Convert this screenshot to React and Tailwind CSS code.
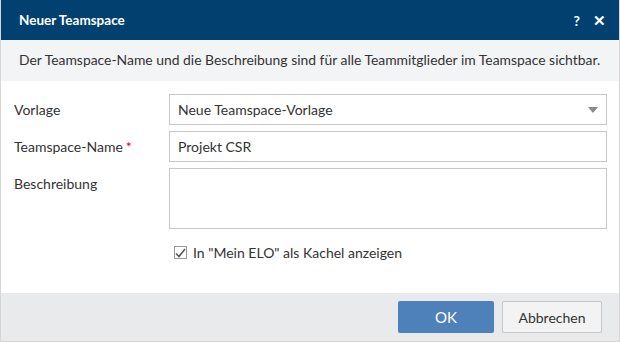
import React, { useState } from 'react';

const font = { fontFamily: 'Lato, "Open Sans", sans-serif' };

function FieldRow({ label, required, children, top }) {
  return (
    <div className={`flex ${top ? 'items-start' : 'items-center'}`}>
      <div className={`w-[155px] shrink-0 text-[14px] text-[#333] ${top ? 'pt-[5px]' : ''}`}>
        {label}
        {required && <span className="ml-[3px] text-[#d0021b]">*</span>}
      </div>
      <div className="flex-1">{children}</div>
    </div>
  );
}

export default function App() {
  const [name, setName] = useState('Projekt CSR');
  const [desc, setDesc] = useState('');
  const [tile, setTile] = useState(true);

  return (
    <div
      className="flex h-[342px] w-[620px] flex-col border-x border-b border-[#d6d6d6] bg-white text-[#333]"
      style={font}
    >
      {/* Title bar */}
      <div className="flex h-[40px] shrink-0 items-center justify-between bg-[#02406f] pl-[18px] pr-[13px] text-white">
        <span className="text-[13.5px] font-bold">Neuer Teamspace</span>
        <div className="flex items-center gap-[13px] text-[14px] font-bold">
          <span>?</span>
          <span className="text-[15px] leading-none">✕</span>
        </div>
      </div>

      {/* Info */}
      <div className="flex h-[41px] shrink-0 items-center whitespace-nowrap bg-[#f3f4f6] px-[18px] text-[13.9px]">
        Der Teamspace-Name und die Beschreibung sind für alle Teammitglieder im Teamspace sichtbar.
      </div>

      {/* Form */}
      <div className="flex flex-1 flex-col gap-[6px] pl-[13px] pr-[12px] pt-[13px]">
        <FieldRow label="Vorlage">
          <div className="flex h-[31px] items-center justify-between border border-[#c8c8c8] pl-[8px] pr-[8px] text-[14px]">
            <span>Neue Teamspace-Vorlage</span>
            <svg width="10" height="6" viewBox="0 0 10 6">
              <path d="M0 0h10L5 6z" fill="#8a8a8a" />
            </svg>
          </div>
        </FieldRow>
        <FieldRow label="Teamspace-Name" required>
          <input
            value={name}
            onChange={(e) => setName(e.target.value)}
            className="h-[31px] w-full border border-[#c8c8c8] px-[8px] text-[14px] outline-none"
            style={font}
          />
        </FieldRow>
        <FieldRow label="Beschreibung" top>
          <textarea
            value={desc}
            onChange={(e) => setDesc(e.target.value)}
            className="block h-[61px] w-full resize-none border border-[#c8c8c8] px-[8px] py-[6px] text-[14px] outline-none"
            style={font}
          />
        </FieldRow>
        <label className="mt-[7px] flex items-center gap-[6px] pl-[160px] text-[14px]">
          <span
            onClick={() => setTile(!tile)}
            className="flex h-[13px] w-[13px] items-center justify-center border border-[#9a9a9a] bg-white"
          >
            {tile && (
              <svg width="11" height="10" viewBox="0 0 11 10">
                <path d="M1 5.5l3 3L10 1" fill="none" stroke="#555" strokeWidth="1.6" />
              </svg>
            )}
          </span>
          <span>In "Mein ELO" als Kachel anzeigen</span>
        </label>
      </div>

      {/* Footer */}
      <div className="flex h-[48px] shrink-0 items-center justify-end gap-[8px] bg-[#e9eaec] pr-[17px]">
        <button className="h-[32px] w-[96px] rounded-[2px] bg-[#4e80ba] text-[15px] text-white" style={font}>
          OK
        </button>
        <button
          className="h-[32px] w-[100px] rounded-[2px] border border-[#c6c6c6] bg-[#f3f3f3] text-[14px] text-[#333]"
          style={font}
        >
          Abbrechen
        </button>
      </div>
    </div>
  );
}
